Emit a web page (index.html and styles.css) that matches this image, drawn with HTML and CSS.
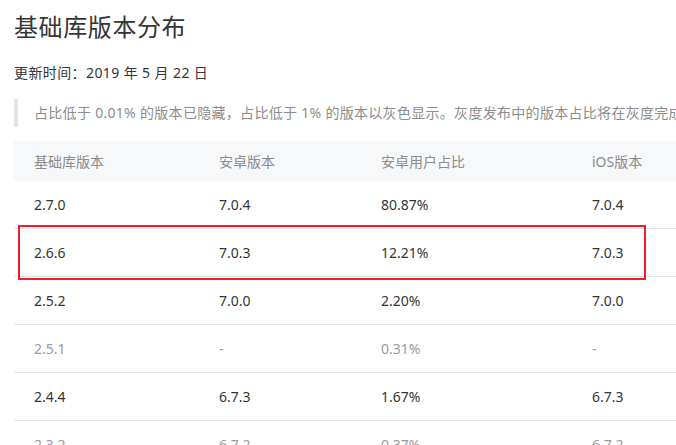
FILE: index.html
```html
<!DOCTYPE html>
<html lang="zh-CN">
<head>
<meta charset="utf-8">
<title>基础库版本分布</title>
<link rel="stylesheet" href="styles.css">
</head>
<body>
<main class="page">
  <h1 class="title">基础库版本分布</h1>
  <p class="updated">更新时间：2019 年 5 月 22 日</p>
  <blockquote class="note">占比低于 0.01% 的版本已隐藏，占比低于 1% 的版本以灰色显示。灰度发布中的版本占比将在灰度完成后更新。</blockquote>
  <div class="table-wrap">
    <table class="versions">
      <colgroup>
        <col class="c1"><col class="c2"><col class="c3"><col class="c4">
      </colgroup>
      <thead>
        <tr><th>基础库版本</th><th>安卓版本</th><th>安卓用户占比</th><th>iOS版本</th></tr>
      </thead>
      <tbody>
        <tr><td>2.7.0</td><td>7.0.4</td><td>80.87%</td><td>7.0.4</td></tr>
        <tr><td>2.6.6</td><td>7.0.3</td><td>12.21%</td><td>7.0.3</td></tr>
        <tr><td>2.5.2</td><td>7.0.0</td><td>2.20%</td><td>7.0.0</td></tr>
        <tr class="minor"><td>2.5.1</td><td>-</td><td>0.31%</td><td>-</td></tr>
        <tr><td>2.4.4</td><td>6.7.3</td><td>1.67%</td><td>6.7.3</td></tr>
        <tr class="minor"><td>2.3.2</td><td>6.7.2</td><td>0.37%</td><td>6.7.2</td></tr>
      </tbody>
    </table>
    <div class="highlight"></div>
  </div>
</main>
</body>
</html>
```

FILE: styles.css
```css
html, body {
  margin: 0;
  padding: 0;
  overflow: hidden;
  background: #fff;
}
body {
  font-family: "Noto Sans", "Noto Sans CJK SC", sans-serif;
  color: #353535;
  width: 676px;
  height: 445px;
}
.page {
  padding: 9px 0 0 14px;
}
.title {
  margin: 0;
  font-size: 24px;
  line-height: 36px;
  font-weight: 400;
  letter-spacing: 0.6px;
  color: #353535;
}
.updated {
  margin: 17px 0 0;
  font-size: 14px;
  line-height: 22px;
  letter-spacing: 0.4px;
  color: #353535;
}
.note {
  margin: 15px 0 0;
  padding: 3px 0 3px 16px;
  border-left: 4px solid #e5e5e5;
  font-size: 14px;
  line-height: 22px;
  letter-spacing: 0.3px;
  color: #8c8c8c;
  white-space: nowrap;
}
.table-wrap {
  position: relative;
  margin-top: 14px;
  width: 820px;
}
.versions {
  border-collapse: collapse;
  table-layout: fixed;
  width: 820px;
  font-size: 14px;
}
.c1 { width: 185px; }
.c2 { width: 162px; }
.c3 { width: 211px; }
.c4 { width: 262px; }
.versions th {
  height: 40px;
  padding: 0 0 0 20px;
  text-align: left;
  font-weight: 400;
  color: #8c8c8c;
  background: #f7f8fa;
}
.versions td {
  height: 47px;
  padding: 0 0 0 20px;
  border-bottom: 1px solid #e5e5e5;
  color: #353535;
}
.versions tr.minor td {
  color: #9c9c9c;
}
.highlight {
  position: absolute;
  left: 4px;
  top: 84px;
  width: 628px;
  height: 55px;
  box-sizing: border-box;
  border: 2px solid #f01d24;
}
```
